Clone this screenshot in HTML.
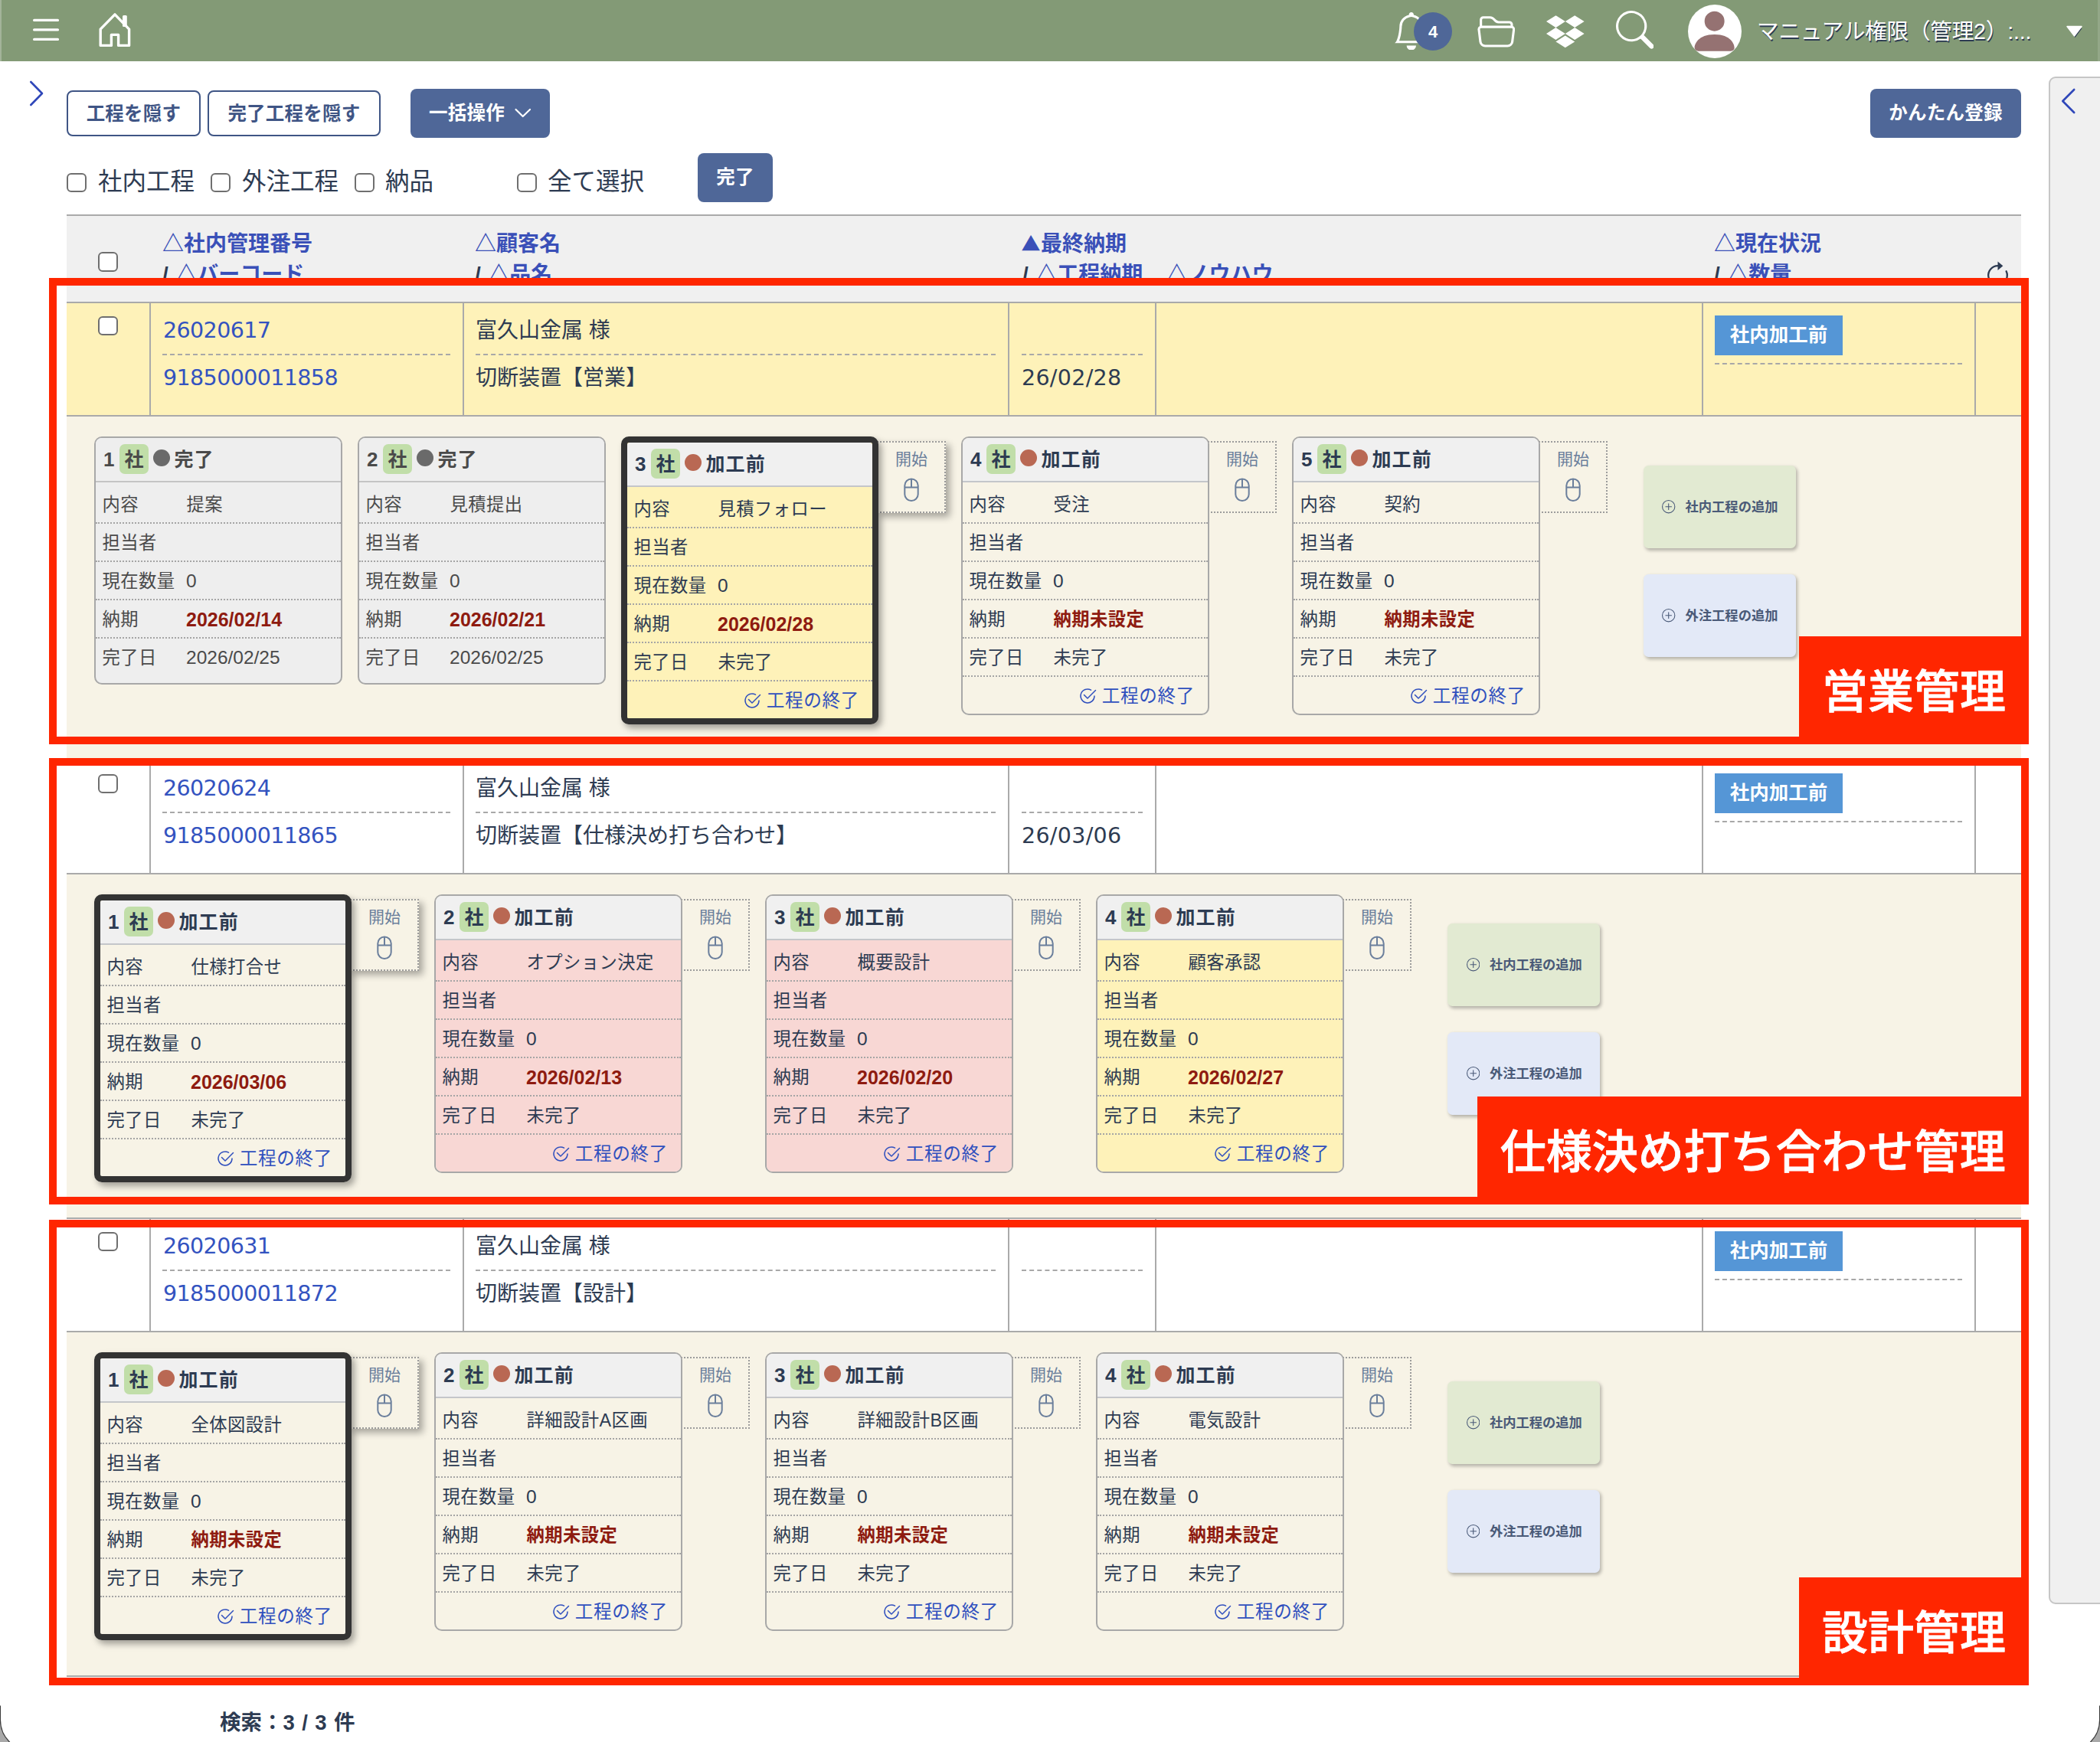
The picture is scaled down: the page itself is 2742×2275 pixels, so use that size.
<!DOCTYPE html><html lang="ja"><head><meta charset="utf-8"><title>工程管理</title><style>
*{box-sizing:border-box;margin:0;padding:0}
html,body{width:2742px;height:2275px;overflow:hidden;background:#fff}
body{position:relative;font-family:"Liberation Sans","Noto Sans CJK JP",sans-serif;color:#2d3b52;font-size:28px}
.abs{position:absolute}
.hdr{position:absolute;left:0;top:0;width:2742px;height:80px;background:#839a76}
.hdr .edgeL{position:absolute;left:0;top:0;width:2px;height:80px;background:#a3b49a}
.hdr .edgeR{position:absolute;right:0;top:0;width:3px;height:80px;background:#93a788}
.uname{position:absolute;left:2294px;top:20.5px;font-size:28.6px;line-height:40px;color:#fff;text-shadow:1px 1.5px 0.5px #2d3b52;white-space:nowrap;letter-spacing:-0.2px}
.badge4{position:absolute;left:1846px;top:16px;width:50px;height:50px;border-radius:50%;background:#4f6798;color:#fff;font-weight:bold;font-size:22px;line-height:51px;text-align:center}
.avatar{position:absolute;left:2204px;top:6px;width:70px;height:70px;border-radius:50%;background:#fff;overflow:hidden}
.btn{position:absolute;border-radius:8px;font-weight:bold;font-size:24.5px;letter-spacing:0.25px;text-align:center;white-space:nowrap}
.btn.o{border:2px solid #3f5585;color:#3f5585;background:#fff}
.btn.f{background:#4f6798;color:#fff}
.cb{position:absolute;width:25.6px;height:25.6px;border:2px solid #6f6f6f;border-radius:6px;background:#fff}
.cbl{position:absolute;font-size:31.5px;line-height:40px;white-space:nowrap;color:#2d3b52}
.thead{position:absolute;left:87px;top:280px;width:2552px;height:114px;background:#f0f0f0;border-top:2px solid #aaa}
.th{position:absolute;font-size:28px;font-weight:bold;line-height:40px;color:#3a50b8;white-space:nowrap}
.th i{font-style:normal;color:#2d3b52;letter-spacing:0.9px}
.th .tri{font-family:"Noto Sans CJK JP",sans-serif;font-size:25px;line-height:0;margin-left:-1.5px;margin-right:0.5px}
.sl{margin:0 1.7px}
.row{position:absolute;left:87px;width:2552px;height:150px;border-top:2px solid #aaa;border-bottom:2px solid #aaa}
.row .v{position:absolute;top:0;width:2px;height:146px;background:#aaa}
.row .t{position:absolute;font-size:28px;line-height:40px;white-space:nowrap;color:#2d3b52}
.row .n{font-family:"DejaVu Sans","Liberation Sans",sans-serif;font-size:28.5px;letter-spacing:-0.6px;color:#3353c0}
.row .d{font-family:"DejaVu Sans","Liberation Sans",sans-serif;font-size:28.5px;letter-spacing:0.3px}
.row .dash{position:absolute;height:0;border-top:2px dashed #a8a8a8}
.stat{position:absolute;left:2152px;top:16px;width:167px;height:52px;background:#5596d6;color:#fff;font-weight:bold;font-size:25.5px;line-height:50px;text-align:center;white-space:nowrap}
.sec{position:absolute;left:87px;width:2552px;height:448px;background:#f7f3e6}
.card{position:absolute;width:323.6px;border:2px solid #a8a8a8;border-radius:10px;overflow:hidden;color:#2d3b52;font-size:24.5px}
.card.act{width:335.6px;border:8px solid #333;box-shadow:4px 5px 9px rgba(0,0,0,.35)}
.card.done{background:#eee;color:#4a4a4a}
.card .h{height:58px;border-bottom:2px solid #c4c6ca;background:#f0f0f0;position:relative;font-weight:bold;font-size:26px;line-height:56px;white-space:nowrap}
.card.done .h{background:#eee;border-bottom-color:#c4c4c4}
.card .h .no{position:absolute;left:10px;top:0}
.card .h .sha{position:absolute;left:31px;top:8px;width:38px;height:39px;border-radius:7px;background:#c1dea9;text-align:center;line-height:40px;font-size:25px}
.card .h .dot{position:absolute;left:75px;top:15px;width:22px;height:22px;border-radius:50%;background:#b96853}
.card.done .h .dot{background:#6a6a6a}
.card .h .st{position:absolute;left:102.5px;top:0;font-size:25px;letter-spacing:1.1px}
.card .r{height:50px;border-bottom:2px dotted #a5a5a5;position:relative;line-height:48px;white-space:nowrap}
.card .r.first{height:54px;padding-top:4px}
.card .r.first span{margin-top:4px}
.card .r.last{height:58px;border-bottom:none}
.card .r.end{height:48px;border-bottom:none;line-height:48px}
.card .r .l{position:absolute;left:8.5px;top:0.6px;font-size:23.3px;letter-spacing:0.45px}
.card .r .x{position:absolute;left:118.5px;top:0.6px;font-size:23.3px;letter-spacing:0.45px}
.card .r .x.num{letter-spacing:0;font-size:24.5px;top:0.7px;left:118px}
.card .r .red{color:#8e1b10;font-weight:bold}
.card .r .x.red.num{font-size:25px}
.card .body.y{background:#fef2b9}
.card.act .h{border-radius:4px 4px 0 0}
.card .body.p{background:#f8d7d4}
.card .end a{position:absolute;right:16.5px;top:1px;font-size:23.6px;letter-spacing:0.7px;color:#3050be;text-decoration:none}
.card .end svg{position:absolute;left:-30.5px;top:11.5px}
.start{position:absolute;width:90px;height:94px;border:2px dotted #9c9c9c;border-left:none;font-size:21px;color:#6b7f9c;text-align:center;line-height:30px;padding-top:6.5px;padding-left:3px;background:#f7f3e6}
.start.sh{box-shadow:5px 5px 9px rgba(0,0,0,.33)}
.start svg{display:block;margin:9.5px auto 0}
.add{position:absolute;width:199px;height:108px;border-radius:6.5px;box-shadow:2px 2.5px 4px rgba(0,0,0,.27);font-weight:bold;font-size:17.3px;color:#4a5a78;line-height:108px;white-space:nowrap}
.add.g{background:#e2ead2}
.add.b{background:#e3e9f7}
.add span{position:absolute;left:54.5px;top:0}
.add svg{position:absolute;left:24.2px;top:45.3px}
.rect{position:absolute;left:64px;width:2585px;border:10px solid #ff2600}
.lab{position:absolute;background:#ff2600;color:#fff;font-size:60px;font-weight:500;-webkit-text-stroke:0.8px #fff;line-height:148px;height:141px;overflow:hidden;white-space:nowrap;text-align:left;padding-left:30px}
.panel{position:absolute;left:2675px;top:100px;width:80px;height:1995px;background:#f0f0f0;border:2px solid #c6c6c6;border-radius:9px}
.foot{position:absolute;left:287px;top:2230px;word-spacing:1.8px;font-size:27.5px;font-weight:bold;line-height:40px;color:#2d3b52;white-space:nowrap}
</style></head><body>
<div class="hdr"><div class="edgeL"></div><div class="edgeR"></div>
<svg class="abs" style="left:40px;top:20px" width="42" height="40" viewBox="0 0 42 40" ><path d="M4.7 6.4H35.4M4.7 18.9H35.4M4.7 31.4H35.4" stroke="#fff" stroke-width="3.4" stroke-linecap="round" fill="none"/></svg>
<svg class="abs" style="left:125px;top:12px" width="50" height="54" viewBox="125 12 50 54" ><path d="M131.2 38.1L150 18.9L168.6 38.1V59.4H154.6V45.4H145.4V59.4H131.2Z" stroke="#fff" stroke-width="3.4" stroke-linejoin="round" fill="none"/><rect x="160" y="20" width="5.8" height="15" rx="1.5" fill="#fff"/></svg>
<svg class="abs" style="left:1818.3px;top:15.6px" width="49.6" height="49.6" viewBox="0 0 16 16" ><path d="M8 16a2 2 0 0 0 2-2H6a2 2 0 0 0 2 2zM8 1.918l-.797.161A4.002 4.002 0 0 0 4 6c0 .628-.134 2.197-.459 3.742-.16.767-.376 1.566-.663 2.258h10.244c-.287-.692-.502-1.49-.663-2.258C12.134 8.197 12 6.628 12 6a4.002 4.002 0 0 0-3.203-3.92L8 1.917zM14.22 12c.223.447.481.801.78 1H1c.299-.199.557-.553.78-1C2.68 10.2 3 6.88 3 6c0-2.42 1.72-4.44 4.005-4.901a1 1 0 1 1 1.99 0A5.002 5.002 0 0 1 13 6c0 .88.32 4.2 1.22 6z" fill="#fff"/></svg>
<div class="badge4">4</div>
<svg class="abs" style="left:1928.9px;top:14.9px" width="49.6" height="49.6" viewBox="0 0 16 16" ><path d="M1 3.5A1.5 1.5 0 0 1 2.5 2h2.764c.958 0 1.76.56 2.311 1.184C7.985 3.648 8.48 4 9 4h4.5A1.5 1.5 0 0 1 15 5.5v.64c.57.265.94.876.856 1.546l-.64 5.124A2.5 2.5 0 0 1 12.733 15H3.266a2.5 2.5 0 0 1-2.481-2.19l-.64-5.124A1.5 1.5 0 0 1 1 6.14V3.5zM2 6h12v-.5a.5.5 0 0 0-.5-.5H9c-.964 0-1.71-.629-2.174-1.154C6.374 3.334 5.82 3 5.264 3H2.5a.5.5 0 0 0-.5.5V6zm-.367 1a.5.5 0 0 0-.496.562l.64 5.124A1.5 1.5 0 0 0 3.266 14h9.468a1.5 1.5 0 0 0 1.489-1.314l.64-5.124A.5.5 0 0 0 14.367 7H1.633z" fill="#fff"/></svg>
<svg class="abs" style="left:2019px;top:14px" width="49.6" height="49.6" viewBox="0 0 16 16" ><path d="M8.01 4.555 4.005 7.11 8.01 9.665 4.005 12.22 0 9.651l4.005-2.555L0 4.555 4.005 2 8.01 4.555Zm-4.026 8.487 4.006-2.555 4.005 2.555-4.005 2.555-4.006-2.555Zm4.026-3.39 4.005-2.556L8.01 4.555 11.995 2 16 4.555 11.995 7.11 16 9.665l-4.005 2.555L8.01 9.651Z" fill="#fff"/></svg>
<svg class="abs" style="left:2109.6px;top:14.3px" width="49.6" height="49.6" viewBox="0 0 16 16" ><path d="M11.742 10.344a6.5 6.5 0 1 0-1.397 1.398h-.001c.03.04.062.078.098.115l3.85 3.85a1 1 0 0 0 1.415-1.414l-3.85-3.85a1.007 1.007 0 0 0-.115-.1zM12 6.5a5.5 5.5 0 1 1-11 0 5.5 5.5 0 0 1 11 0z" fill="#fff"/></svg>
<div class="avatar"><svg class="abs" style="left:0.2px;top:-0.3px" width="69.3" height="69.3" viewBox="0 0 16 16"><path d="M3 14s-1 0-1-1 1-4 6-4 6 3 6 4-1 1-1 1H3zm5-6a3 3 0 1 0 0-6 3 3 0 0 0 0 6z" fill="#957272"/></svg></div>
<div class="uname">マニュアル権限（管理2）:...</div>
<svg class="abs" style="left:2696px;top:31px" width="26" height="20" viewBox="0 0 26 20" ><path d="M3.5 4.5L12.5 16.5L21.5 4.5Z" fill="#2d3b52" transform="translate(1,1.5)"/><path d="M3 3.5H22L12.5 16Z" fill="#fff" stroke="#fff" stroke-width="1.5" stroke-linejoin="round"/></svg>
</div>
<svg class="abs" style="left:34px;top:100px" width="28" height="44" viewBox="34 100 28 44" ><path d="M40.3 107L55 122L40.3 137" stroke="#2f47b9" stroke-width="2.6" stroke-linecap="round" stroke-linejoin="round" fill="none"/></svg>
<div class="btn o" style="left:87px;top:118px;width:175px;height:60px;line-height:58px">工程を隠す</div>
<div class="btn o" style="left:271px;top:118px;width:226px;height:60px;line-height:58px">完了工程を隠す</div>
<div class="btn f" style="left:536px;top:116px;width:182px;height:64px;line-height:64px;text-align:left;padding-left:24px">一括操作</div>
<svg class="abs" style="left:670px;top:138px" width="26" height="20" viewBox="670 138 26 20" ><path d="M673.5 143L682.7 152L692 143" stroke="#fff" stroke-width="2.2" stroke-linecap="round" stroke-linejoin="round" fill="none"/></svg>
<div class="btn f" style="left:2442px;top:116px;width:197px;height:64px;line-height:64px">かんたん登録</div>
<div class="cb" style="left:87px;top:225.5px"></div><div class="cbl" style="left:128px;top:216.7px">社内工程</div>
<div class="cb" style="left:275px;top:225.5px"></div><div class="cbl" style="left:316px;top:216.7px">外注工程</div>
<div class="cb" style="left:463px;top:225.5px"></div><div class="cbl" style="left:503px;top:216.7px">納品</div>
<div class="cb" style="left:675px;top:225.5px"></div><div class="cbl" style="left:715px;top:216.7px">全て選択</div>
<div class="btn f" style="left:911px;top:200px;width:98px;height:64px;line-height:64px">完了</div>
<div class="thead"></div>
<div class="cb" style="left:128px;top:329px"></div>
<div class="th" style="left:212px;top:299px">△社内管理番号<br><i>/ </i>△バーコード</div>
<div class="th" style="left:620px;top:299px">△顧客名<br><i>/ </i>△品名</div>
<div class="th" style="left:1335px;top:299px"><span class="tri">▲</span>最終納期<br><i>/ </i>△工程納期<span style="margin-left:30px">△ノウハウ</span></div>
<div class="th" style="left:2238px;top:299px">△現在状況<br><i>/ </i>△数量</div>
<svg class="abs" style="left:2590px;top:336px" width="40" height="40" viewBox="2590 336 40 40" ><path d="M2608.5 347.2A12.3 12.3 0 1 0 2619.6 354.2" stroke="#2d3b52" stroke-width="2.3" stroke-linecap="round" fill="none"/><path d="M2608.5 341.5L2615.3 347.2L2608.5 352.9Z" fill="#2d3b52"/></svg>
<div class="row" style="top:394px;background:#fef2b9">
<div class="v" style="left:108px"></div>
<div class="v" style="left:517px"></div>
<div class="v" style="left:1229px"></div>
<div class="v" style="left:1421px"></div>
<div class="v" style="left:2134.5px"></div>
<div class="v" style="left:2491px"></div>
<div class="t n" style="left:126px;top:15.5px">26020617</div>
<div class="t n" style="left:126px;top:77.5px">9185000011858</div>
<div class="dash" style="left:125px;top:66px;width:376px"></div>
<div class="t" style="left:534px;top:15.5px">富久山金属 様</div>
<div class="t" style="left:534px;top:78px">切断装置【営業】</div>
<div class="dash" style="left:534px;top:66px;width:679px"></div>
<div class="dash" style="left:1247px;top:66px;width:158px"></div>
<div class="t d" style="left:1247px;top:77.5px">26/02/28</div>
<div class="stat">社内加工前</div>
<div class="dash" style="left:2152px;top:78px;width:323px"></div>
</div>
<div class="sec" style="top:544px"></div>
<div class="cb" style="left:128px;top:412.5px"></div>
<div class="row" style="top:992px;background:#fff">
<div class="v" style="left:108px"></div>
<div class="v" style="left:517px"></div>
<div class="v" style="left:1229px"></div>
<div class="v" style="left:1421px"></div>
<div class="v" style="left:2134.5px"></div>
<div class="v" style="left:2491px"></div>
<div class="t n" style="left:126px;top:15.5px">26020624</div>
<div class="t n" style="left:126px;top:77.5px">9185000011865</div>
<div class="dash" style="left:125px;top:66px;width:376px"></div>
<div class="t" style="left:534px;top:15.5px">富久山金属 様</div>
<div class="t" style="left:534px;top:78px">切断装置【仕様決め打ち合わせ】</div>
<div class="dash" style="left:534px;top:66px;width:679px"></div>
<div class="dash" style="left:1247px;top:66px;width:158px"></div>
<div class="t d" style="left:1247px;top:77.5px">26/03/06</div>
<div class="stat">社内加工前</div>
<div class="dash" style="left:2152px;top:78px;width:323px"></div>
</div>
<div class="sec" style="top:1142px"></div>
<div class="cb" style="left:128px;top:1010.5px"></div>
<div class="row" style="top:1590px;background:#fff">
<div class="v" style="left:108px"></div>
<div class="v" style="left:517px"></div>
<div class="v" style="left:1229px"></div>
<div class="v" style="left:1421px"></div>
<div class="v" style="left:2134.5px"></div>
<div class="v" style="left:2491px"></div>
<div class="t n" style="left:126px;top:15.5px">26020631</div>
<div class="t n" style="left:126px;top:77.5px">9185000011872</div>
<div class="dash" style="left:125px;top:66px;width:376px"></div>
<div class="t" style="left:534px;top:15.5px">富久山金属 様</div>
<div class="t" style="left:534px;top:78px">切断装置【設計】</div>
<div class="dash" style="left:534px;top:66px;width:679px"></div>
<div class="dash" style="left:1247px;top:66px;width:158px"></div>
<div class="stat">社内加工前</div>
<div class="dash" style="left:2152px;top:78px;width:323px"></div>
</div>
<div class="sec" style="top:1740px"></div>
<div class="cb" style="left:128px;top:1608.5px"></div>
<div class="abs" style="left:87px;top:2188px;width:2552px;height:2px;background:#aaa"></div>
<div class="card done" style="left:123px;top:570px"><div class="h"><span class="no">1</span><span class="sha">社</span><span class="dot"></span><span class="st">完了</span></div><div class="body "><div class="r first"><span class="l">内容</span><span class="x ">提案</span></div><div class="r"><span class="l">担当者</span><span class="x "></span></div><div class="r"><span class="l">現在数量</span><span class="x num">0</span></div><div class="r"><span class="l">納期</span><span class="x red num">2026/02/14</span></div><div class="r last"><span class="l">完了日</span><span class="x num">2026/02/25</span></div></div></div>
<div class="card done" style="left:467px;top:570px"><div class="h"><span class="no">2</span><span class="sha">社</span><span class="dot"></span><span class="st">完了</span></div><div class="body "><div class="r first"><span class="l">内容</span><span class="x ">見積提出</span></div><div class="r"><span class="l">担当者</span><span class="x "></span></div><div class="r"><span class="l">現在数量</span><span class="x num">0</span></div><div class="r"><span class="l">納期</span><span class="x red num">2026/02/21</span></div><div class="r last"><span class="l">完了日</span><span class="x num">2026/02/25</span></div></div></div>
<div class="start sh" style="left:1144.6px;top:576px">開始<svg width="20" height="32" viewBox="0.5 0 20 32"><rect x="1.8" y="1.5" width="17.4" height="28.6" rx="8.7" ry="8.7" fill="none" stroke="#6b7f9c" stroke-width="2"/><path d="M1.8 12.6H19.2M10.5 1.5V12.6" stroke="#6b7f9c" stroke-width="2" fill="none"/></svg></div>
<div class="card act" style="left:811px;top:570px;background:#fef2b9"><div class="h"><span class="no">3</span><span class="sha">社</span><span class="dot"></span><span class="st">加工前</span></div><div class="body y"><div class="r first"><span class="l">内容</span><span class="x ">見積フォロー</span></div><div class="r"><span class="l">担当者</span><span class="x "></span></div><div class="r"><span class="l">現在数量</span><span class="x num">0</span></div><div class="r"><span class="l">納期</span><span class="x red num">2026/02/28</span></div><div class="r"><span class="l">完了日</span><span class="x ">未完了</span></div><div class="r end"><a><svg width="24" height="24" viewBox="0 0 16 16" fill="#3050be"><path d="M2.5 8a5.5 5.5 0 0 1 8.25-4.764.5.5 0 0 0 .5-.866A6.5 6.5 0 1 0 14.5 8a.5.5 0 0 0-1 0 5.5 5.5 0 1 1-11 0z"/><path d="M15.354 3.354a.5.5 0 0 0-.708-.708L8 9.293 5.354 6.646a.5.5 0 1 0-.708.708l3 3a.5.5 0 0 0 .708 0l7-7z"/></svg>工程の終了</a></div></div></div>
<div class="start" style="left:1576.6px;top:576px">開始<svg width="20" height="32" viewBox="0.5 0 20 32"><rect x="1.8" y="1.5" width="17.4" height="28.6" rx="8.7" ry="8.7" fill="none" stroke="#6b7f9c" stroke-width="2"/><path d="M1.8 12.6H19.2M10.5 1.5V12.6" stroke="#6b7f9c" stroke-width="2" fill="none"/></svg></div>
<div class="card" style="left:1255px;top:570px"><div class="h"><span class="no">4</span><span class="sha">社</span><span class="dot"></span><span class="st">加工前</span></div><div class="body "><div class="r first"><span class="l">内容</span><span class="x ">受注</span></div><div class="r"><span class="l">担当者</span><span class="x "></span></div><div class="r"><span class="l">現在数量</span><span class="x num">0</span></div><div class="r"><span class="l">納期</span><span class="x red">納期未設定</span></div><div class="r"><span class="l">完了日</span><span class="x ">未完了</span></div><div class="r end"><a><svg width="24" height="24" viewBox="0 0 16 16" fill="#3050be"><path d="M2.5 8a5.5 5.5 0 0 1 8.25-4.764.5.5 0 0 0 .5-.866A6.5 6.5 0 1 0 14.5 8a.5.5 0 0 0-1 0 5.5 5.5 0 1 1-11 0z"/><path d="M15.354 3.354a.5.5 0 0 0-.708-.708L8 9.293 5.354 6.646a.5.5 0 1 0-.708.708l3 3a.5.5 0 0 0 .708 0l7-7z"/></svg>工程の終了</a></div></div></div>
<div class="start" style="left:2008.6px;top:576px">開始<svg width="20" height="32" viewBox="0.5 0 20 32"><rect x="1.8" y="1.5" width="17.4" height="28.6" rx="8.7" ry="8.7" fill="none" stroke="#6b7f9c" stroke-width="2"/><path d="M1.8 12.6H19.2M10.5 1.5V12.6" stroke="#6b7f9c" stroke-width="2" fill="none"/></svg></div>
<div class="card" style="left:1687px;top:570px"><div class="h"><span class="no">5</span><span class="sha">社</span><span class="dot"></span><span class="st">加工前</span></div><div class="body "><div class="r first"><span class="l">内容</span><span class="x ">契約</span></div><div class="r"><span class="l">担当者</span><span class="x "></span></div><div class="r"><span class="l">現在数量</span><span class="x num">0</span></div><div class="r"><span class="l">納期</span><span class="x red">納期未設定</span></div><div class="r"><span class="l">完了日</span><span class="x ">未完了</span></div><div class="r end"><a><svg width="24" height="24" viewBox="0 0 16 16" fill="#3050be"><path d="M2.5 8a5.5 5.5 0 0 1 8.25-4.764.5.5 0 0 0 .5-.866A6.5 6.5 0 1 0 14.5 8a.5.5 0 0 0-1 0 5.5 5.5 0 1 1-11 0z"/><path d="M15.354 3.354a.5.5 0 0 0-.708-.708L8 9.293 5.354 6.646a.5.5 0 1 0-.708.708l3 3a.5.5 0 0 0 .708 0l7-7z"/></svg>工程の終了</a></div></div></div>
<div class="add g" style="left:2146px;top:608px"><svg width="17.4" height="17.4" viewBox="0 0 16 16" fill="#4a5a78"><path d="M8 15A7 7 0 1 1 8 1a7 7 0 0 1 0 14zm0 1A8 8 0 1 0 8 0a8 8 0 0 0 0 16z"/><path d="M8 4a.5.5 0 0 1 .5.5v3h3a.5.5 0 0 1 0 1h-3v3a.5.5 0 0 1-1 0v-3h-3a.5.5 0 0 1 0-1h3v-3A.5.5 0 0 1 8 4z"/></svg><span>社内工程の追加</span></div>
<div class="add b" style="left:2146px;top:750px"><svg width="17.4" height="17.4" viewBox="0 0 16 16" fill="#4a5a78"><path d="M8 15A7 7 0 1 1 8 1a7 7 0 0 1 0 14zm0 1A8 8 0 1 0 8 0a8 8 0 0 0 0 16z"/><path d="M8 4a.5.5 0 0 1 .5.5v3h3a.5.5 0 0 1 0 1h-3v3a.5.5 0 0 1-1 0v-3h-3a.5.5 0 0 1 0-1h3v-3A.5.5 0 0 1 8 4z"/></svg><span>外注工程の追加</span></div>
<div class="start sh" style="left:456.6px;top:1174px">開始<svg width="20" height="32" viewBox="0.5 0 20 32"><rect x="1.8" y="1.5" width="17.4" height="28.6" rx="8.7" ry="8.7" fill="none" stroke="#6b7f9c" stroke-width="2"/><path d="M1.8 12.6H19.2M10.5 1.5V12.6" stroke="#6b7f9c" stroke-width="2" fill="none"/></svg></div>
<div class="card act" style="left:123px;top:1168px"><div class="h"><span class="no">1</span><span class="sha">社</span><span class="dot"></span><span class="st">加工前</span></div><div class="body "><div class="r first"><span class="l">内容</span><span class="x ">仕様打合せ</span></div><div class="r"><span class="l">担当者</span><span class="x "></span></div><div class="r"><span class="l">現在数量</span><span class="x num">0</span></div><div class="r"><span class="l">納期</span><span class="x red num">2026/03/06</span></div><div class="r"><span class="l">完了日</span><span class="x ">未完了</span></div><div class="r end"><a><svg width="24" height="24" viewBox="0 0 16 16" fill="#3050be"><path d="M2.5 8a5.5 5.5 0 0 1 8.25-4.764.5.5 0 0 0 .5-.866A6.5 6.5 0 1 0 14.5 8a.5.5 0 0 0-1 0 5.5 5.5 0 1 1-11 0z"/><path d="M15.354 3.354a.5.5 0 0 0-.708-.708L8 9.293 5.354 6.646a.5.5 0 1 0-.708.708l3 3a.5.5 0 0 0 .708 0l7-7z"/></svg>工程の終了</a></div></div></div>
<div class="start" style="left:888.6px;top:1174px">開始<svg width="20" height="32" viewBox="0.5 0 20 32"><rect x="1.8" y="1.5" width="17.4" height="28.6" rx="8.7" ry="8.7" fill="none" stroke="#6b7f9c" stroke-width="2"/><path d="M1.8 12.6H19.2M10.5 1.5V12.6" stroke="#6b7f9c" stroke-width="2" fill="none"/></svg></div>
<div class="card" style="left:567px;top:1168px"><div class="h"><span class="no">2</span><span class="sha">社</span><span class="dot"></span><span class="st">加工前</span></div><div class="body p"><div class="r first"><span class="l">内容</span><span class="x ">オプション決定</span></div><div class="r"><span class="l">担当者</span><span class="x "></span></div><div class="r"><span class="l">現在数量</span><span class="x num">0</span></div><div class="r"><span class="l">納期</span><span class="x red num">2026/02/13</span></div><div class="r"><span class="l">完了日</span><span class="x ">未完了</span></div><div class="r end"><a><svg width="24" height="24" viewBox="0 0 16 16" fill="#3050be"><path d="M2.5 8a5.5 5.5 0 0 1 8.25-4.764.5.5 0 0 0 .5-.866A6.5 6.5 0 1 0 14.5 8a.5.5 0 0 0-1 0 5.5 5.5 0 1 1-11 0z"/><path d="M15.354 3.354a.5.5 0 0 0-.708-.708L8 9.293 5.354 6.646a.5.5 0 1 0-.708.708l3 3a.5.5 0 0 0 .708 0l7-7z"/></svg>工程の終了</a></div></div></div>
<div class="start" style="left:1320.6px;top:1174px">開始<svg width="20" height="32" viewBox="0.5 0 20 32"><rect x="1.8" y="1.5" width="17.4" height="28.6" rx="8.7" ry="8.7" fill="none" stroke="#6b7f9c" stroke-width="2"/><path d="M1.8 12.6H19.2M10.5 1.5V12.6" stroke="#6b7f9c" stroke-width="2" fill="none"/></svg></div>
<div class="card" style="left:999px;top:1168px"><div class="h"><span class="no">3</span><span class="sha">社</span><span class="dot"></span><span class="st">加工前</span></div><div class="body p"><div class="r first"><span class="l">内容</span><span class="x ">概要設計</span></div><div class="r"><span class="l">担当者</span><span class="x "></span></div><div class="r"><span class="l">現在数量</span><span class="x num">0</span></div><div class="r"><span class="l">納期</span><span class="x red num">2026/02/20</span></div><div class="r"><span class="l">完了日</span><span class="x ">未完了</span></div><div class="r end"><a><svg width="24" height="24" viewBox="0 0 16 16" fill="#3050be"><path d="M2.5 8a5.5 5.5 0 0 1 8.25-4.764.5.5 0 0 0 .5-.866A6.5 6.5 0 1 0 14.5 8a.5.5 0 0 0-1 0 5.5 5.5 0 1 1-11 0z"/><path d="M15.354 3.354a.5.5 0 0 0-.708-.708L8 9.293 5.354 6.646a.5.5 0 1 0-.708.708l3 3a.5.5 0 0 0 .708 0l7-7z"/></svg>工程の終了</a></div></div></div>
<div class="start" style="left:1752.6px;top:1174px">開始<svg width="20" height="32" viewBox="0.5 0 20 32"><rect x="1.8" y="1.5" width="17.4" height="28.6" rx="8.7" ry="8.7" fill="none" stroke="#6b7f9c" stroke-width="2"/><path d="M1.8 12.6H19.2M10.5 1.5V12.6" stroke="#6b7f9c" stroke-width="2" fill="none"/></svg></div>
<div class="card" style="left:1431px;top:1168px"><div class="h"><span class="no">4</span><span class="sha">社</span><span class="dot"></span><span class="st">加工前</span></div><div class="body y"><div class="r first"><span class="l">内容</span><span class="x ">顧客承認</span></div><div class="r"><span class="l">担当者</span><span class="x "></span></div><div class="r"><span class="l">現在数量</span><span class="x num">0</span></div><div class="r"><span class="l">納期</span><span class="x red num">2026/02/27</span></div><div class="r"><span class="l">完了日</span><span class="x ">未完了</span></div><div class="r end"><a><svg width="24" height="24" viewBox="0 0 16 16" fill="#3050be"><path d="M2.5 8a5.5 5.5 0 0 1 8.25-4.764.5.5 0 0 0 .5-.866A6.5 6.5 0 1 0 14.5 8a.5.5 0 0 0-1 0 5.5 5.5 0 1 1-11 0z"/><path d="M15.354 3.354a.5.5 0 0 0-.708-.708L8 9.293 5.354 6.646a.5.5 0 1 0-.708.708l3 3a.5.5 0 0 0 .708 0l7-7z"/></svg>工程の終了</a></div></div></div>
<div class="add g" style="left:1890.4px;top:1206px"><svg width="17.4" height="17.4" viewBox="0 0 16 16" fill="#4a5a78"><path d="M8 15A7 7 0 1 1 8 1a7 7 0 0 1 0 14zm0 1A8 8 0 1 0 8 0a8 8 0 0 0 0 16z"/><path d="M8 4a.5.5 0 0 1 .5.5v3h3a.5.5 0 0 1 0 1h-3v3a.5.5 0 0 1-1 0v-3h-3a.5.5 0 0 1 0-1h3v-3A.5.5 0 0 1 8 4z"/></svg><span>社内工程の追加</span></div>
<div class="add b" style="left:1890.4px;top:1348px"><svg width="17.4" height="17.4" viewBox="0 0 16 16" fill="#4a5a78"><path d="M8 15A7 7 0 1 1 8 1a7 7 0 0 1 0 14zm0 1A8 8 0 1 0 8 0a8 8 0 0 0 0 16z"/><path d="M8 4a.5.5 0 0 1 .5.5v3h3a.5.5 0 0 1 0 1h-3v3a.5.5 0 0 1-1 0v-3h-3a.5.5 0 0 1 0-1h3v-3A.5.5 0 0 1 8 4z"/></svg><span>外注工程の追加</span></div>
<div class="start sh" style="left:456.6px;top:1772px">開始<svg width="20" height="32" viewBox="0.5 0 20 32"><rect x="1.8" y="1.5" width="17.4" height="28.6" rx="8.7" ry="8.7" fill="none" stroke="#6b7f9c" stroke-width="2"/><path d="M1.8 12.6H19.2M10.5 1.5V12.6" stroke="#6b7f9c" stroke-width="2" fill="none"/></svg></div>
<div class="card act" style="left:123px;top:1766px"><div class="h"><span class="no">1</span><span class="sha">社</span><span class="dot"></span><span class="st">加工前</span></div><div class="body "><div class="r first"><span class="l">内容</span><span class="x ">全体図設計</span></div><div class="r"><span class="l">担当者</span><span class="x "></span></div><div class="r"><span class="l">現在数量</span><span class="x num">0</span></div><div class="r"><span class="l">納期</span><span class="x red">納期未設定</span></div><div class="r"><span class="l">完了日</span><span class="x ">未完了</span></div><div class="r end"><a><svg width="24" height="24" viewBox="0 0 16 16" fill="#3050be"><path d="M2.5 8a5.5 5.5 0 0 1 8.25-4.764.5.5 0 0 0 .5-.866A6.5 6.5 0 1 0 14.5 8a.5.5 0 0 0-1 0 5.5 5.5 0 1 1-11 0z"/><path d="M15.354 3.354a.5.5 0 0 0-.708-.708L8 9.293 5.354 6.646a.5.5 0 1 0-.708.708l3 3a.5.5 0 0 0 .708 0l7-7z"/></svg>工程の終了</a></div></div></div>
<div class="start" style="left:888.6px;top:1772px">開始<svg width="20" height="32" viewBox="0.5 0 20 32"><rect x="1.8" y="1.5" width="17.4" height="28.6" rx="8.7" ry="8.7" fill="none" stroke="#6b7f9c" stroke-width="2"/><path d="M1.8 12.6H19.2M10.5 1.5V12.6" stroke="#6b7f9c" stroke-width="2" fill="none"/></svg></div>
<div class="card" style="left:567px;top:1766px"><div class="h"><span class="no">2</span><span class="sha">社</span><span class="dot"></span><span class="st">加工前</span></div><div class="body "><div class="r first"><span class="l">内容</span><span class="x ">詳細設計A区画</span></div><div class="r"><span class="l">担当者</span><span class="x "></span></div><div class="r"><span class="l">現在数量</span><span class="x num">0</span></div><div class="r"><span class="l">納期</span><span class="x red">納期未設定</span></div><div class="r"><span class="l">完了日</span><span class="x ">未完了</span></div><div class="r end"><a><svg width="24" height="24" viewBox="0 0 16 16" fill="#3050be"><path d="M2.5 8a5.5 5.5 0 0 1 8.25-4.764.5.5 0 0 0 .5-.866A6.5 6.5 0 1 0 14.5 8a.5.5 0 0 0-1 0 5.5 5.5 0 1 1-11 0z"/><path d="M15.354 3.354a.5.5 0 0 0-.708-.708L8 9.293 5.354 6.646a.5.5 0 1 0-.708.708l3 3a.5.5 0 0 0 .708 0l7-7z"/></svg>工程の終了</a></div></div></div>
<div class="start" style="left:1320.6px;top:1772px">開始<svg width="20" height="32" viewBox="0.5 0 20 32"><rect x="1.8" y="1.5" width="17.4" height="28.6" rx="8.7" ry="8.7" fill="none" stroke="#6b7f9c" stroke-width="2"/><path d="M1.8 12.6H19.2M10.5 1.5V12.6" stroke="#6b7f9c" stroke-width="2" fill="none"/></svg></div>
<div class="card" style="left:999px;top:1766px"><div class="h"><span class="no">3</span><span class="sha">社</span><span class="dot"></span><span class="st">加工前</span></div><div class="body "><div class="r first"><span class="l">内容</span><span class="x ">詳細設計B区画</span></div><div class="r"><span class="l">担当者</span><span class="x "></span></div><div class="r"><span class="l">現在数量</span><span class="x num">0</span></div><div class="r"><span class="l">納期</span><span class="x red">納期未設定</span></div><div class="r"><span class="l">完了日</span><span class="x ">未完了</span></div><div class="r end"><a><svg width="24" height="24" viewBox="0 0 16 16" fill="#3050be"><path d="M2.5 8a5.5 5.5 0 0 1 8.25-4.764.5.5 0 0 0 .5-.866A6.5 6.5 0 1 0 14.5 8a.5.5 0 0 0-1 0 5.5 5.5 0 1 1-11 0z"/><path d="M15.354 3.354a.5.5 0 0 0-.708-.708L8 9.293 5.354 6.646a.5.5 0 1 0-.708.708l3 3a.5.5 0 0 0 .708 0l7-7z"/></svg>工程の終了</a></div></div></div>
<div class="start" style="left:1752.6px;top:1772px">開始<svg width="20" height="32" viewBox="0.5 0 20 32"><rect x="1.8" y="1.5" width="17.4" height="28.6" rx="8.7" ry="8.7" fill="none" stroke="#6b7f9c" stroke-width="2"/><path d="M1.8 12.6H19.2M10.5 1.5V12.6" stroke="#6b7f9c" stroke-width="2" fill="none"/></svg></div>
<div class="card" style="left:1431px;top:1766px"><div class="h"><span class="no">4</span><span class="sha">社</span><span class="dot"></span><span class="st">加工前</span></div><div class="body "><div class="r first"><span class="l">内容</span><span class="x ">電気設計</span></div><div class="r"><span class="l">担当者</span><span class="x "></span></div><div class="r"><span class="l">現在数量</span><span class="x num">0</span></div><div class="r"><span class="l">納期</span><span class="x red">納期未設定</span></div><div class="r"><span class="l">完了日</span><span class="x ">未完了</span></div><div class="r end"><a><svg width="24" height="24" viewBox="0 0 16 16" fill="#3050be"><path d="M2.5 8a5.5 5.5 0 0 1 8.25-4.764.5.5 0 0 0 .5-.866A6.5 6.5 0 1 0 14.5 8a.5.5 0 0 0-1 0 5.5 5.5 0 1 1-11 0z"/><path d="M15.354 3.354a.5.5 0 0 0-.708-.708L8 9.293 5.354 6.646a.5.5 0 1 0-.708.708l3 3a.5.5 0 0 0 .708 0l7-7z"/></svg>工程の終了</a></div></div></div>
<div class="add g" style="left:1890.4px;top:1804px"><svg width="17.4" height="17.4" viewBox="0 0 16 16" fill="#4a5a78"><path d="M8 15A7 7 0 1 1 8 1a7 7 0 0 1 0 14zm0 1A8 8 0 1 0 8 0a8 8 0 0 0 0 16z"/><path d="M8 4a.5.5 0 0 1 .5.5v3h3a.5.5 0 0 1 0 1h-3v3a.5.5 0 0 1-1 0v-3h-3a.5.5 0 0 1 0-1h3v-3A.5.5 0 0 1 8 4z"/></svg><span>社内工程の追加</span></div>
<div class="add b" style="left:1890.4px;top:1946px"><svg width="17.4" height="17.4" viewBox="0 0 16 16" fill="#4a5a78"><path d="M8 15A7 7 0 1 1 8 1a7 7 0 0 1 0 14zm0 1A8 8 0 1 0 8 0a8 8 0 0 0 0 16z"/><path d="M8 4a.5.5 0 0 1 .5.5v3h3a.5.5 0 0 1 0 1h-3v3a.5.5 0 0 1-1 0v-3h-3a.5.5 0 0 1 0-1h3v-3A.5.5 0 0 1 8 4z"/></svg><span>外注工程の追加</span></div>
<div class="panel"></div>
<svg class="abs" style="left:2686px;top:110px" width="30" height="44" viewBox="2686 110 30 44" ><path d="M2708.2 117L2693.3 132L2708.2 147" stroke="#2f47b9" stroke-width="2.6" stroke-linecap="round" stroke-linejoin="round" fill="none"/></svg>
<div class="rect" style="top:363px;height:609px"></div>
<div class="rect" style="top:990px;height:583px"></div>
<div class="rect" style="top:1593px;height:608px"></div>
<div class="lab" style="left:2349px;top:831px;width:300px">営業管理</div>
<div class="lab" style="left:1928.7px;top:1432px;width:720.3px">仕様決め打ち合わせ管理</div>
<div class="lab" style="left:2349px;top:2060px;width:300px">設計管理</div>
<div class="foot">検索：3 / 3 件</div>
<svg class="abs" style="left:0;top:2215px" width="2742" height="60" viewBox="0 2215 2742 60"><path d="M0.4 2228V2246A41 41 0 0 0 41.4 2287L-1 2287V2228Z" fill="#a9a9a9" stroke="#3a3a3a" stroke-width="1.2"/><path d="M2741.6 2228V2246A41 41 0 0 1 2700.6 2287L2743 2287V2228Z" fill="#a9a9a9" stroke="#3a3a3a" stroke-width="1.2"/></svg>
</body></html>
